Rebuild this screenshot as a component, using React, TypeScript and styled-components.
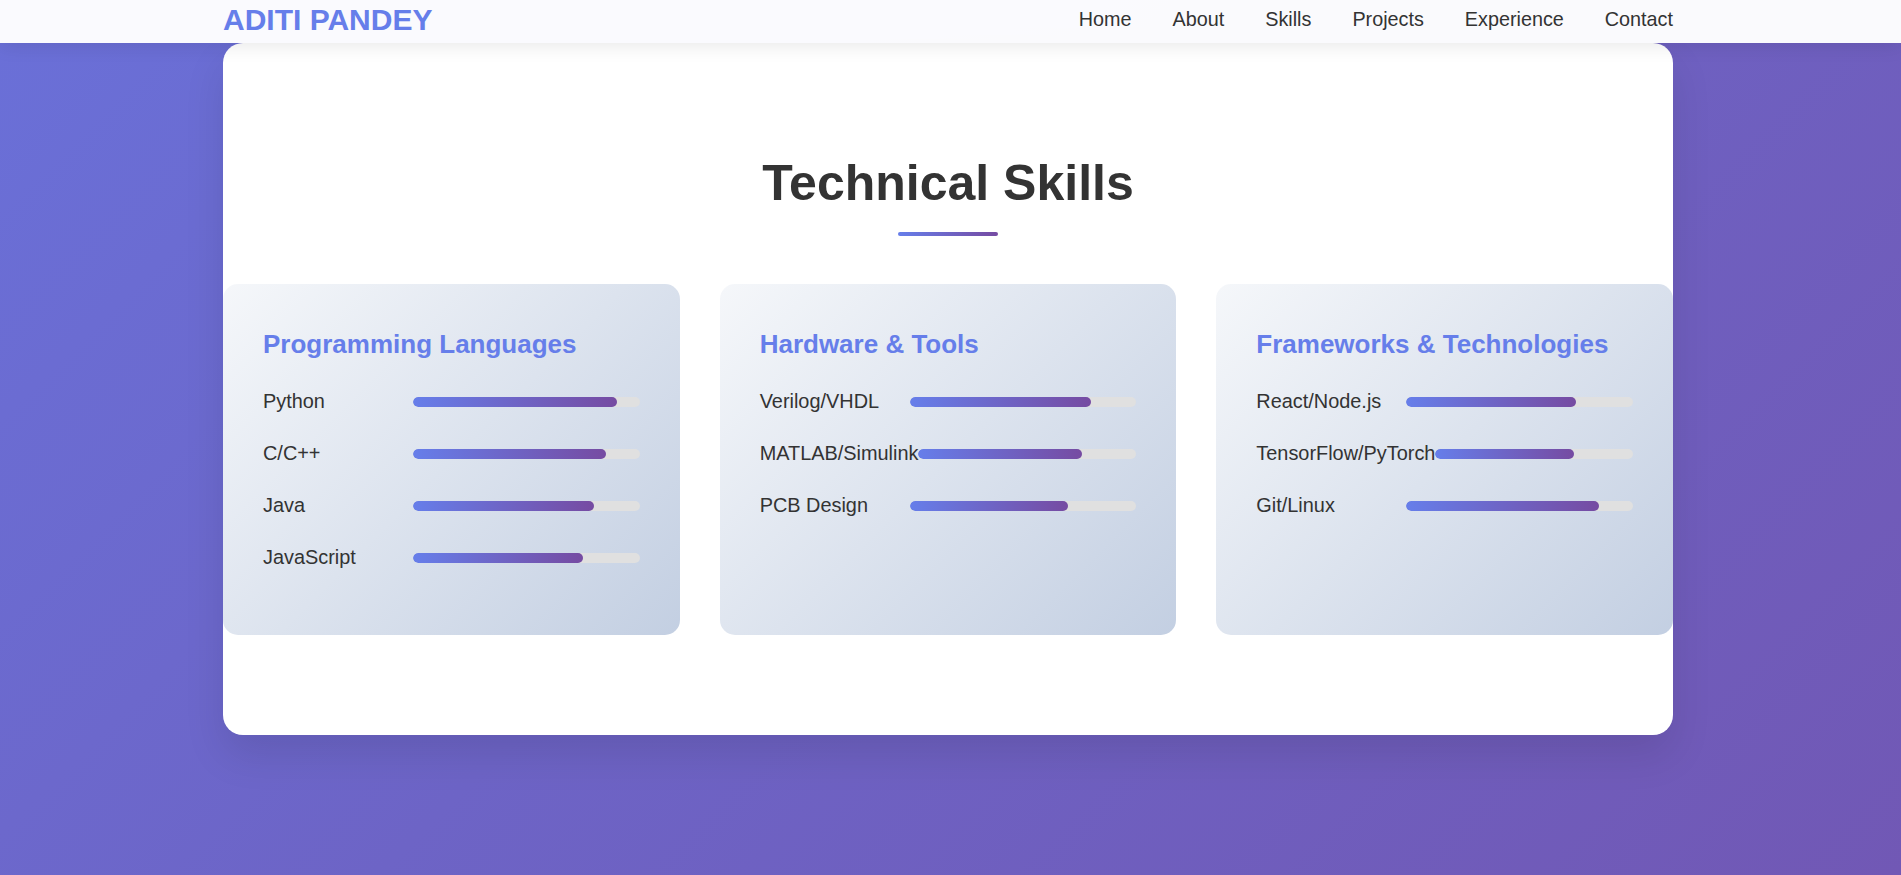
import React from "react";
import styled, { createGlobalStyle } from "styled-components";

const GlobalStyle = createGlobalStyle`
  * { box-sizing: border-box; }
  html, body { margin: 0; padding: 0; }
  body {
    font-family: "Liberation Sans", Arial, Helvetica, sans-serif;
    line-height: 1.6;
    color: #333;
  }
`;

const Page = styled.div`
  min-height: 100vh;
  background: linear-gradient(135deg, #6a70d8 0%, #6d64c6 45%, #7158b5 100%);
`;

const Header = styled.header`
  position: relative;
  z-index: 10;
  height: 43px;
  background: rgba(255, 255, 255, 0.97);
  box-shadow: 0 2px 20px rgba(0, 0, 0, 0.1);
`;

const HeaderInner = styled.div`
  width: 1450px;
  height: 100%;
  margin-left: calc((100% - 1455px) / 2);
  padding-bottom: 4px;
  display: flex;
  align-items: center;
  justify-content: space-between;
`;

const Logo = styled.div`
  font-size: 30px;
  font-weight: 700;
  line-height: 1;
  color: #667eea;
`;

const NavList = styled.nav`
  display: flex;
  gap: 41px;
`;

const NavLink = styled.a`
  font-size: 19.8px;
  line-height: 1.2;
  color: #333;
  text-decoration: none;
`;

const Section = styled.section`
  width: 1450px;
  margin-left: calc((100% - 1455px) / 2);
  background: #fff;
  border-radius: 20px;
  padding: 100px 0 100px;
  box-shadow: 0 20px 40px rgba(0, 0, 0, 0.1);
`;

const Title = styled.h2`
  margin: 0;
  text-align: center;
  font-size: 50px;
  font-weight: 700;
  line-height: 1.6;
  color: #333;
`;

const TitleBar = styled.div`
  width: 100px;
  height: 4px;
  margin: 9px auto 48px;
  border-radius: 2px;
  background: linear-gradient(90deg, #667eea, #764ba2);
`;

const Grid = styled.div`
  display: grid;
  grid-template-columns: repeat(3, 1fr);
  gap: 40px;
`;

const Card = styled.div`
  padding: 40px;
  border-radius: 15px;
  background: linear-gradient(135deg, #f5f7fa 0%, #c3cfe2 100%);
`;

const CardTitle = styled.h3`
  margin: 0 0 20.8px;
  font-size: 26px;
  font-weight: 700;
  line-height: 1.6;
  color: #667eea;
`;

const Row = styled.div`
  display: flex;
  align-items: center;
  margin-bottom: 20.2px;
`;

const Label = styled.span`
  min-width: 150px;
  font-size: 19.9px;
  line-height: 1.6;
  color: #333;
  white-space: nowrap;
`;

const Track = styled.div`
  flex: 1;
  height: 10px;
  border-radius: 5px;
  background: #e0e0e0;
  overflow: hidden;
`;

const Fill = styled.div`
  height: 100%;
  border-radius: 5px;
  background: linear-gradient(90deg, #667eea, #764ba2);
`;

const categories = [
  {
    title: "Programming Languages",
    skills: [
      ["Python", 90],
      ["C/C++", 85],
      ["Java", 80],
      ["JavaScript", 75],
    ],
  },
  {
    title: "Hardware & Tools",
    skills: [
      ["Verilog/VHDL", 80],
      ["MATLAB/Simulink", 75],
      ["PCB Design", 70],
    ],
  },
  {
    title: "Frameworks & Technologies",
    skills: [
      ["React/Node.js", 75],
      ["TensorFlow/PyTorch", 70],
      ["Git/Linux", 85],
    ],
  },
] as const;

const navItems = ["Home", "About", "Skills", "Projects", "Experience", "Contact"];

export default function App() {
  return (
    <>
      <GlobalStyle />
      <Page>
        <Header>
          <HeaderInner>
            <Logo>ADITI PANDEY</Logo>
            <NavList>
              {navItems.map((n) => (
                <NavLink key={n} href={`#${n.toLowerCase()}`}>
                  {n}
                </NavLink>
              ))}
            </NavList>
          </HeaderInner>
        </Header>
        <Section id="skills">
          <Title>Technical Skills</Title>
          <TitleBar />
          <Grid>
            {categories.map((c) => (
              <Card key={c.title}>
                <CardTitle>{c.title}</CardTitle>
                {c.skills.map(([name, pct]) => (
                  <Row key={name}>
                    <Label>{name}</Label>
                    <Track>
                      <Fill style={{ width: `${pct}%` }} />
                    </Track>
                  </Row>
                ))}
              </Card>
            ))}
          </Grid>
        </Section>
      </Page>
    </>
  );
}
